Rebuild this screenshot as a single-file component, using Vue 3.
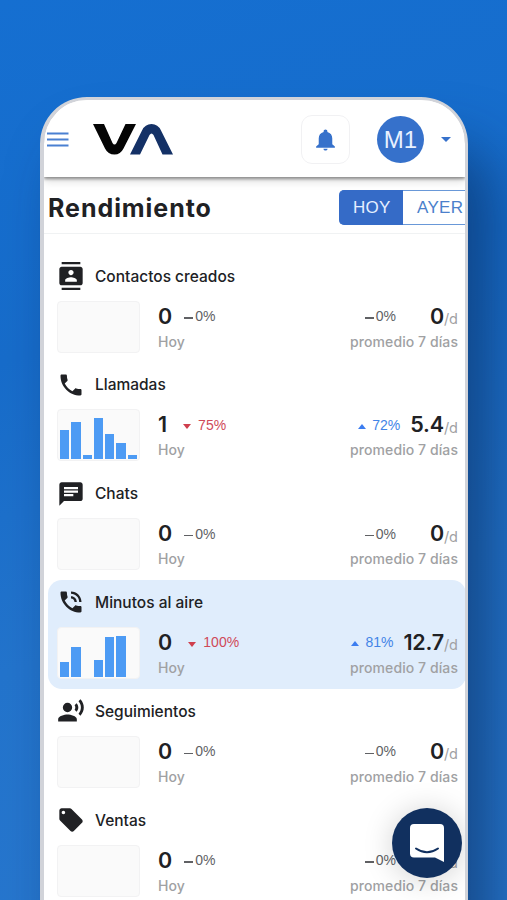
<script setup>
const rows = [
  { title: 'Contactos creados', icon: 'contacts', value: '0', delta: '0%', trend: 'flat', avg: '0', avgDelta: '0%', avgTrend: 'flat', bars: [] },
  { title: 'Llamadas', icon: 'call', value: '1', delta: '75%', trend: 'down', avg: '5.4', avgDelta: '72%', avgTrend: 'up', bars: [29, 37, 4, 41, 25, 16.5, 4] },
  { title: 'Chats', icon: 'chat', value: '0', delta: '0%', trend: 'flat', avg: '0', avgDelta: '0%', avgTrend: 'flat', bars: [] },
  { title: 'Minutos al aire', icon: 'talk', value: '0', delta: '100%', trend: 'down', avg: '12.7', avgDelta: '81%', avgTrend: 'up', bars: [14.5, 29.5, 0, 16.5, 39.5, 41, 0], active: true },
  { title: 'Seguimientos', icon: 'voice', value: '0', delta: '0%', trend: 'flat', avg: '0', avgDelta: '0%', avgTrend: 'flat', bars: [] },
  { title: 'Ventas', icon: 'tag', value: '0', delta: '0%', trend: 'flat', avg: '0', avgDelta: '0%', avgTrend: 'flat', bars: [] },
]
const icons = {
  contacts: 'M20 0H4v2h16V0zM4 24h16v-2H4v2zM20 4H4c-1.1 0-2 .9-2 2v12c0 1.1.9 2 2 2h16c1.1 0 2-.9 2-2V6c0-1.1-.9-2-2-2zm-8 2.75c1.24 0 2.25 1.01 2.25 2.25s-1.01 2.25-2.25 2.25S9.75 10.24 9.75 9 10.76 6.75 12 6.75zM17 17H7v-1.5c0-1.67 3.33-2.5 5-2.5s5 .83 5 2.5V17z',
  call: 'M6.62 10.79c1.44 2.83 3.76 5.14 6.59 6.59l2.2-2.2c.27-.27.67-.36 1.02-.24 1.12.37 2.33.57 3.57.57.55 0 1 .45 1 1V20c0 .55-.45 1-1 1-9.39 0-17-7.61-17-17 0-.55.45-1 1-1h3.5c.55 0 1 .45 1 1 0 1.25.2 2.45.57 3.57.11.35.03.74-.25 1.02l-2.2 2.2z',
  chat: 'M20 2H4c-1.1 0-1.99.9-1.99 2L2 22l4-4h14c1.1 0 2-.9 2-2V4c0-1.1-.9-2-2-2zM6 9h12v2H6V9zm8 5H6v-2h8v2zm4-6H6V6h12v2z',
  talk: 'M20 15.5c-1.25 0-2.45-.2-3.57-.57-.1-.03-.21-.05-.31-.05-.26 0-.51.1-.71.29l-2.2 2.2c-2.83-1.44-5.15-3.75-6.59-6.59l2.2-2.2c.28-.28.36-.67.25-1.02C8.7 6.45 8.5 5.25 8.5 4c0-.55-.45-1-1-1H4c-.55 0-1 .45-1 1 0 9.39 7.61 17 17 17 .55 0 1-.45 1-1v-3.5c0-.55-.45-1-1-1zM19 12h2c0-4.97-4.03-9-9-9v2c3.87 0 7 3.13 7 7zm-4 0h2c0-2.76-2.24-5-5-5v2c1.66 0 3 1.34 3 3z',
  voice: 'M9 5a4 4 0 1 0 0 8 4 4 0 0 0 0-8zm0 10c-2.67 0-8 1.34-8 4v2h16v-2c0-2.66-5.33-4-8-4zm7.76-9.64l-1.68 1.69c.84 1.18.84 2.71 0 3.89l1.68 1.69c2.02-2.02 2.02-5.07 0-7.27zM20.07 2l-1.63 1.63c2.77 3.02 2.77 7.56 0 10.74L20.07 16c3.9-3.89 3.91-9.95 0-14z',
  tag: 'M21.41 11.58l-9-9C12.05 2.22 11.55 2 11 2H4c-1.1 0-2 .9-2 2v7c0 .55.22 1.05.59 1.42l9 9c.36.36.86.58 1.41.58.55 0 1.05-.22 1.41-.59l7-7c.37-.36.59-.86.59-1.41 0-.55-.23-1.06-.59-1.42zM5.5 7C4.67 7 4 6.33 4 5.5S4.67 4 5.5 4 7 4.67 7 5.5 6.33 7 5.5 7z',
}
</script>

<template>
  <main class="stage">
    <section class="phone">
      <header class="bar">
        <svg class="menu" viewBox="0 0 22 16"><path d="M0 1.500h21.500M0 7.500h21.500M0 13.500h21.500" stroke="#4a80d2" stroke-width="2.200" /></svg>
        <svg class="logo" viewBox="0 0 80 32">
          <path d="M0 0H11L19.500 19Q21.500 22 23.500 19L32.500 0H43L30.500 24.500Q27.500 30.500 21.500 30.500Q15 30.500 12 24.500Z" fill="#050505" />
          <path d="M37 30.500L49 6.500Q52 0 58.500 0Q65 0 68 6.500L80 30.500H69.500L60.500 11Q58.500 8 56.500 11L47 30.500Z" fill="#143166" />
        </svg>
        <div class="bell">
          <svg viewBox="0 0 24 24"><path d="M12 22.500c1.100 0 2-.7 2-1.700h-4c0 1 .9 1.700 2 1.700zM18.500 16.500V11c0-3.070-1.640-5.640-4.700-6.320V4c0-.9-.8-1.700-1.800-1.700s-1.800.8-1.800 1.700v.68C7.130 5.360 5.500 7.920 5.500 11v5.500l-2.500 2.200V20h18v-1.300z" fill="#3671cb" /></svg>
        </div>
        <div class="avatar">M1</div>
        <i class="caret"></i>
      </header>

      <div class="heading">
        <h1>Rendimiento</h1>
        <div class="tabs"><span class="tab on">HOY</span><span class="tab">AYER</span></div>
      </div>

      <div class="list">
        <article v-for="r in rows" :key="r.title" class="row" :class="{ active: r.active }">
          <div class="name">
            <svg class="icon" viewBox="0 0 24 24"><path :d="icons[r.icon]" /></svg>
            <span>{{ r.title }}</span>
          </div>
          <div class="data">
            <div class="chart">
              <i v-for="(b, i) in r.bars" :key="i" :style="{ height: b + 'px' }"></i>
            </div>
            <div class="today">
              <div class="line">
                <b>{{ r.value }}</b>
                <span class="delta" :class="[r.trend, { wide: r.delta.length > 3 }]"><i></i>{{ r.delta }}</span>
              </div>
              <small>Hoy</small>
            </div>
            <div class="average">
              <div class="line">
                <span class="delta" :class="r.avgTrend"><i></i>{{ r.avgDelta }}</span>
                <b>{{ r.avg }}</b><em>/d</em>
              </div>
              <small>promedio 7 días</small>
            </div>
          </div>
        </article>
      </div>

      <button class="chat-button" aria-label="Chat">
        <svg viewBox="0 0 34 38">
          <path d="M4 0h26q4 0 4 4v34l-9-4.500H4q-4 0-4-4V4q0-4 4-4z" fill="#fff" />
          <path d="M6 24.500q11 7.500 22 0" fill="none" stroke="#11305f" stroke-width="2" stroke-linecap="round" />
        </svg>
      </button>
    </section>
  </main>
</template>

<style>
body { margin: 0; }
</style>

<style scoped>
* { box-sizing: border-box; }
.stage {
  width: 507px; height: 900px; overflow: hidden; padding: 97px 0 0 40px;
  background: linear-gradient(165deg, #156fd1 0%, #176cca 35%, #2374cc 65%, #2877ce 100%);
  font-family: Inter, "Liberation Sans", sans-serif; color: #202124;
}
.phone {
  position: relative; width: 428px; height: 850px; overflow: clip; background: #fff;
  border: 3px solid #d1d3d9; border-left-width: 4px; border-radius: 47px 47px 0 0;
  box-shadow: 26px 50px 56px rgba(8, 40, 86, .56);
}
.bar {
  height: 77px; display: flex; align-items: center; padding-left: 3px; background: #fff;
  box-shadow: 0 2px 3px rgba(0, 0, 0, .4), 0 4px 9px rgba(0, 0, 0, .14);
}
.menu { width: 22px; height: 16px; margin-top: 3px; }
.logo { width: 80px; height: 32px; margin-left: 24px; margin-top: 3px; }
.bell {
  width: 49px; height: 49px; margin-left: 128px; margin-top: 2px; border: 1.500px solid #f1f1f3; border-radius: 11px;
  display: grid; place-items: center;
}
.bell svg { width: 25px; height: 27px; }
.avatar {
  width: 47px; height: 47px; margin-left: 27px; margin-top: 1px; border-radius: 50%; background: #3671cb; color: #e8f1ff;
  display: grid; place-items: center; font: 24px/47px "Liberation Sans", sans-serif;
}
.caret { width: 0; height: 0; margin-left: 17px; margin-top: 2px; border: 5px solid transparent; border-top: 5.500px solid #3671cb; border-bottom: 0; }
.heading {
  height: 57px; display: flex; align-items: center; justify-content: space-between; padding: 5px 0 0 4px;
  border-bottom: 1px solid #f0f2f3;
}
h1 { margin: 0; padding-top: 1px; font-size: 25px; line-height: 32px; font-weight: 700; letter-spacing: .95px; }
.tabs { display: flex; height: 35px; width: 126px; font: 17px/33px "Liberation Sans", sans-serif; }
.tab { flex: none; width: 75px; padding-left: 14px; border: 1px solid #6998d8; border-left: 0; color: #4b7fcb; letter-spacing: .3px; }
.tab.on { width: 64px; border-color: #356bc7; background: #356bc7; color: #e6efff; border-radius: 5px 0 0 5px; }
.list { padding-top: 19.600px; }
.row { height: 108.800px; margin-left: 4px; width: 418px; padding: 9.500px 0 0 9px; border-radius: 14px; }
.row.active { background: #e0edfc; }
.name { height: 26px; display: flex; align-items: center; font-size: 15.500px; font-weight: 500; }
.icon { width: 28px; height: 28px; fill: #202124; flex: none; margin-right: 10px; }
.data { display: flex; margin-top: 11.500px; }
.chart {
  width: 83px; height: 52px; padding: 0 2px 1px; border: 1px solid #f2f2f3; border-radius: 4px; background: #fafafa;
  display: flex; align-items: flex-end; gap: 2px;
}
.chart i { width: 9.400px; background: #4d9bf4; }
.today { margin-left: 18px; }
.average { margin-left: auto; margin-right: 8px; text-align: right; }
.line { height: 31px; display: flex; align-items: center; white-space: nowrap; }
.average .line { justify-content: flex-end; }
b { font-size: 21.500px; font-weight: 600; line-height: 31px; }
.average b { letter-spacing: -.2px; }
em { font-style: normal; font-size: 14.500px; color: #a0a1a3; margin-top: 5px; }
small { display: block; font-size: 14px; line-height: 20px; font-weight: 450; color: #a0a1a3; letter-spacing: .08px; }
.delta { display: flex; align-items: center; font: 14px/20px "Liberation Sans", sans-serif; color: #606164; }
.delta i { flex: none; }
.flat i { width: 9px; height: 1.500px; background: #606164; margin-right: 2px; margin-top: 4px; }
.today .delta { margin-left: 12px; }
.today .down { margin-left: 16px; letter-spacing: .1px; }
.today .wide { margin-left: 16px; }
.average .delta { margin-right: 10px; }
.average .flat { margin-right: 34px; }
.down { color: #cf4958; }
.down i { border: 4.500px solid transparent; border-top: 5px solid #cf3f4d; border-bottom: 0; margin: 4px 7px 0 0; }
.up { color: #4384e7; }
.up i { border: 4.500px solid transparent; border-bottom: 5px solid #3c7df0; border-top: 0; margin: 3px 6px 0 0; }
.chat-button {
  position: absolute; left: 348px; top: 708px; width: 70px; height: 70px; border: 0; border-radius: 50%; padding: 0;
  display: grid; place-items: center; background: #11305f; box-shadow: 0 2px 30px rgba(0, 0, 0, .18);
}
.chat-button svg { width: 34px; height: 38px; }
</style>
